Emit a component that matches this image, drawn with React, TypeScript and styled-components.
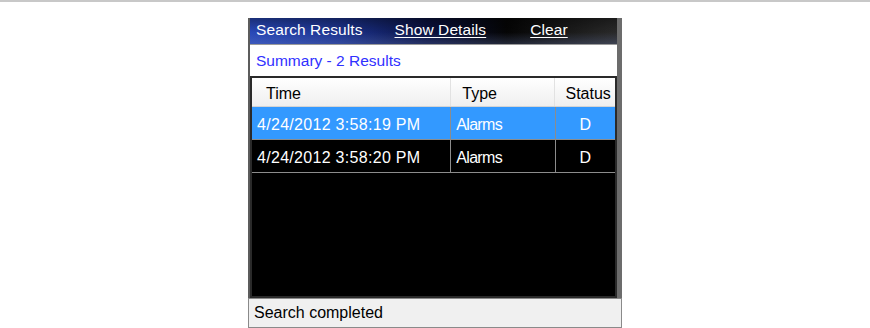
import React from "react"
import styled, { createGlobalStyle } from "styled-components"

const GlobalStyle = createGlobalStyle`
    body {
        margin: 0;
        background: #ffffff;
        font-family: "Liberation Sans", Arial, sans-serif;
    }
`

const results = [
    {time: "4/24/2012 3:58:19 PM", type: "Alarms", status: "D", selected: true},
    {time: "4/24/2012 3:58:20 PM", type: "Alarms", status: "D", selected: false},
]

const App = () => {
    return (
        <>
            <GlobalStyle />
            <TopRule />
            <Panel>
                <Upper>
                    <Toolbar>
                        <ToolTitle>Search Results</ToolTitle>
                        <ToolLink $left={32}>Show Details</ToolLink>
                        <ToolLink $left={44}>Clear</ToolLink>
                    </Toolbar>
                    <Summary>Summary - 2 Results</Summary>
                    <Grid>
                        <HeadRow>
                            <HeadCell $width={201} $pad={14}>Time</HeadCell>
                            <HeadCell $width={105} $pad={11}>Type</HeadCell>
                            <HeadCell $width={60} $pad={10} $last>Status</HeadCell>
                        </HeadRow>
                        {
                            results.map((r, i) => {
                                return (
                                    <Row key={i} $selected={r.selected}>
                                        <Cell $width={201} $spacing={0.3}>{r.time}</Cell>
                                        <Cell $width={105} $spacing={-0.7}>{r.type}</Cell>
                                        <Cell $width={60} $center $last>{r.status}</Cell>
                                    </Row>
                                )
                            })
                        }
                    </Grid>
                </Upper>
                <StatusBar>Search completed</StatusBar>
            </Panel>
        </>
    )
}

const TopRule = styled.div`
    height: 2px;
    background: #c8c8c8;
`

const Panel = styled.div`
    width: 374px;
    margin: 16px auto 0;
    display: flex;
    flex-direction: column;
`

const Upper = styled.div`
    display: flex;
    flex-direction: column;
    border-left: 2px solid #5c5c5c;
    border-right: 5px solid #6c6c6c;
`

const Toolbar = styled.div`
    height: 27px;
    box-sizing: border-box;
    padding: 0 0 3px 6px;
    display: flex;
    align-items: center;
    font-size: 15.5px;
    color: #ffffff;
    background:
        linear-gradient(to bottom, rgba(0, 0, 0, 0.35) 0%, rgba(0, 0, 0, 0) 55%, rgba(120, 140, 200, 0.25) 100%),
        linear-gradient(to right, #2848b8 0%, #1c338e 25%, #0a1240 48%, #050505 70%, #2a2a2a 100%);
    border-bottom: 1px solid #9a9a9a;
`

const ToolTitle = styled.span`
    letter-spacing: 0.1px;
`

const ToolLink = styled.span<{ $left: number }>`
    margin-left: ${p => p.$left}px;
    text-decoration: underline;
    text-underline-offset: 2px;
    letter-spacing: 0.1px;
`

const Summary = styled.div`
    height: 31px;
    display: flex;
    align-items: center;
    padding-left: 6px;
    background: #ffffff;
    color: #3030ff;
    font-size: 15.5px;
`

const Grid = styled.div`
    height: 218px;
    background: #000000;
    border: 2px solid #2a2a2a;
`

const HeadRow = styled.div`
    display: flex;
    height: 28px;
    background: linear-gradient(to bottom, #ffffff 0%, #f7f7f7 50%, #efefef 100%);
    border-bottom: 1px solid #d4d4d4;
`

const HeadCell = styled.div<{ $width: number, $pad: number, $last?: boolean }>`
    width: ${p => p.$width}px;
    box-sizing: border-box;
    padding: 4px 0 0 ${p => p.$pad}px;
    display: flex;
    align-items: center;
    font-size: 16px;
    color: #000000;
    border-right: ${p => p.$last ? "none" : "1px solid #e2e2e2"};
`

const Row = styled.div<{ $selected: boolean }>`
    display: flex;
    height: 33px;
    box-sizing: border-box;
    border-bottom: 1px solid #8c8c8c;
    background: ${p => p.$selected ? "#3399ff" : "#000000"};
    color: #ffffff;
`

const Cell = styled.div<{ $width: number, $spacing?: number, $center?: boolean, $last?: boolean }>`
    width: ${p => p.$width}px;
    box-sizing: border-box;
    display: flex;
    align-items: center;
    justify-content: ${p => p.$center ? "center" : "flex-start"};
    padding: 3px 0 0 ${p => p.$center ? 0 : 5}px;
    font-size: 16px;
    letter-spacing: ${p => p.$spacing ?? 0}px;
    border-right: ${p => p.$last ? "none" : "1px solid #8c8c8c"};
`

const StatusBar = styled.div`
    height: 28px;
    display: flex;
    align-items: center;
    padding-left: 5px;
    background: #f0f0f0;
    border: 1px solid #8a8a8a;
    font-size: 16px;
    color: #000000;
`

export default App
